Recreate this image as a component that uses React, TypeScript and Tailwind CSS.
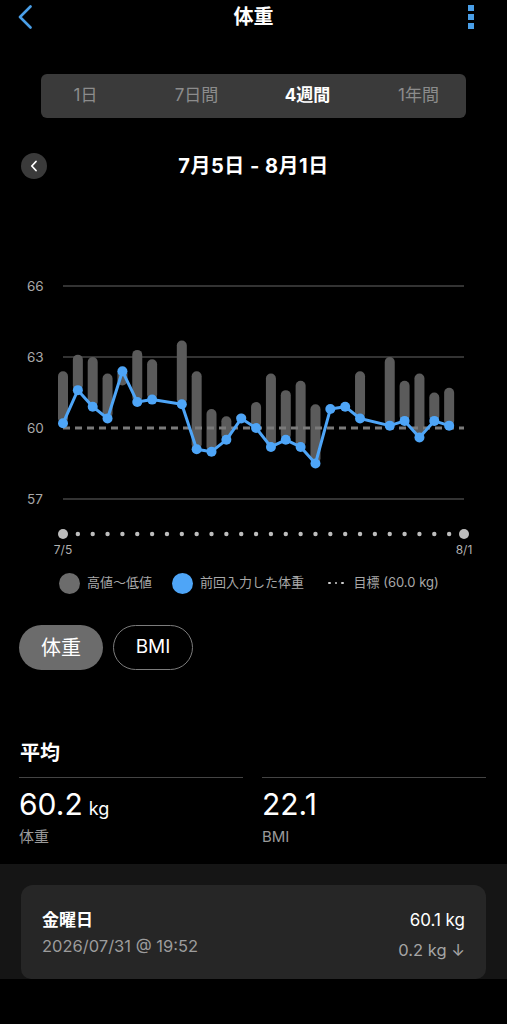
import React from "react"

type Bar = { i: number; hi: number; lo: number }

// day index (0 = 7/5) -> weight last entered
const points: [number, number][] = [
  [0, 60.2], [1, 61.6], [2, 60.9], [3, 60.4], [4, 62.4], [5, 61.1], [6, 61.2],
  [8, 61.0], [9, 59.1], [10, 59.0], [11, 59.5], [12, 60.4], [13, 60.0],
  [14, 59.2], [15, 59.5], [16, 59.2], [17, 58.5], [18, 60.8], [19, 60.9],
  [20, 60.4], [22, 60.1], [23, 60.3], [24, 59.6], [25, 60.3], [26, 60.1],
]

const bars: Bar[] = [
  { i: 0, hi: 62.4, lo: 60.2 },
  { i: 1, hi: 63.1, lo: 61.6 },
  { i: 2, hi: 63.0, lo: 60.9 },
  { i: 3, hi: 62.3, lo: 60.4 },
  { i: 4, hi: 62.5, lo: 61.8 },
  { i: 5, hi: 63.3, lo: 61.1 },
  { i: 6, hi: 62.9, lo: 61.2 },
  { i: 8, hi: 63.7, lo: 61.0 },
  { i: 9, hi: 62.4, lo: 59.1 },
  { i: 10, hi: 60.8, lo: 59.0 },
  { i: 11, hi: 60.5, lo: 59.5 },
  { i: 12, hi: 60.6, lo: 60.3 },
  { i: 13, hi: 61.1, lo: 60.0 },
  { i: 14, hi: 62.3, lo: 59.2 },
  { i: 15, hi: 61.6, lo: 59.5 },
  { i: 16, hi: 62.0, lo: 59.2 },
  { i: 17, hi: 61.0, lo: 58.5 },
  { i: 20, hi: 62.4, lo: 60.4 },
  { i: 22, hi: 63.0, lo: 60.1 },
  { i: 23, hi: 62.0, lo: 60.3 },
  { i: 24, hi: 62.3, lo: 59.6 },
  { i: 25, hi: 61.5, lo: 60.3 },
  { i: 26, hi: 61.7, lo: 60.1 },
]

const X0 = 63
const DX = 401 / 27
const BLUE = "#4ea5f7"

const xOf = (i: number) => X0 + i * DX
const yOf = (kg: number) => 168 - (kg - 60) * 23.667

function WeightChart() {
  const linePts = points.map(([i, kg]) => `${xOf(i)},${yOf(kg)}`).join(" ")
  return (
    <svg width={507} height={300} className="block">
      {[66, 63, 57].map((v) => (
        <line key={v} x1={63} x2={464} y1={yOf(v)} y2={yOf(v)} stroke="#454545" strokeWidth={1.5} />
      ))}
      {[66, 63, 60, 57].map((v) => (
        <text key={v} x={27} y={yOf(v)} dominantBaseline="central" fontSize={13.5} fill="#a9a9a9">
          {v}
        </text>
      ))}
      {bars.map((b) => (
        <rect
          key={b.i}
          x={xOf(b.i) - 5}
          y={yOf(b.hi)}
          width={10}
          height={yOf(b.lo) - yOf(b.hi)}
          rx={5}
          fill="#5b5b5b"
        />
      ))}
      <line x1={63} x2={464} y1={168} y2={168} stroke="#7a7a7a" strokeWidth={3} strokeDasharray="7 5" />
      <polyline points={linePts} fill="none" stroke={BLUE} strokeWidth={3} strokeLinejoin="round" />
      {points.map(([i, kg]) => (
        <circle key={i} cx={xOf(i)} cy={yOf(kg)} r={5} fill={BLUE} />
      ))}
      {Array.from({ length: 28 }, (_, i) => (
        <circle key={i} cx={xOf(i)} cy={274} r={i === 0 || i === 27 ? 5 : 2.2} fill="#bdbdbd" />
      ))}
      <text x={63} y={289} textAnchor="middle" dominantBaseline="central" fontSize={12} fill="#b0b0b0">
        7/5
      </text>
      <text x={464} y={289} textAnchor="middle" dominantBaseline="central" fontSize={12} fill="#b0b0b0">
        8/1
      </text>
    </svg>
  )
}

export default function App() {
  const tabs = ["1日", "7日間", "4週間", "1年間"]
  return (
    <div className="w-[507px] min-h-[1024px] bg-black text-white [font-family:Inter,'Noto_Sans_CJK_JP',sans-serif]">
      {/* header */}
      <div className="flex h-[34px] items-center justify-between">
        <div className="w-[60px] pl-[18px]">
          <svg width={14} height={24} viewBox="0 0 14 24">
            <path d="M12.5 1.5 L2 12 L12.5 22.5" fill="none" stroke="#4a9fe8" strokeWidth={2.6} strokeLinecap="round" strokeLinejoin="round" />
          </svg>
        </div>
        <div className="text-[20px] font-bold">体重</div>
        <div className="w-[60px] pl-[21px]">
          <div className="flex w-[6px] flex-col gap-[3px]">
            <div className="h-[6px] w-[6px] bg-[#4a9fe8]" />
            <div className="h-[6px] w-[6px] bg-[#4a9fe8]" />
            <div className="h-[6px] w-[6px] bg-[#4a9fe8]" />
          </div>
        </div>
      </div>

      {/* range tabs */}
      <div className="mx-[41px] mt-[40px] h-[44px] overflow-visible rounded-[6px] bg-[#3a3a3a]">
        <div className="ml-[-11px] flex h-full w-[444px] items-center">
          {tabs.map((t) => (
            <div
              key={t}
              className={
                t === "4週間"
                  ? "w-[111px] text-center text-[17px] font-bold text-white"
                  : "w-[111px] text-center text-[17px] text-[#8c8c8c]"
              }
            >
              {t}
            </div>
          ))}
        </div>
      </div>

      {/* date range */}
      <div className="mt-[33px] grid h-[28px] grid-cols-[1fr_auto_1fr] items-center">
        <div className="pl-[21px]">
          <div className="flex h-[26px] w-[26px] items-center justify-center rounded-full bg-[#3a3a3a]">
            <svg width={8} height={12} viewBox="0 0 8 12">
              <path d="M6 1.5 L1.8 6 L6 10.5" fill="none" stroke="#fff" strokeWidth={1.8} strokeLinecap="round" strokeLinejoin="round" />
            </svg>
          </div>
        </div>
        <div className="text-[20px] font-bold tracking-[0.5px]">7月5日 - 8月1日</div>
        <div />
      </div>

      <div className="mt-[81px]">
        <WeightChart />
      </div>

      {/* legend */}
      <div className="mt-[11px] flex h-[24px] items-center pl-[59px] text-[13px] text-[#a8a8a8]">
        <div className="h-[21px] w-[21px] rounded-full bg-[#6c6c6c]" />
        <span className="ml-[7px]">高値〜低値</span>
        <div className="ml-[20px] h-[21px] w-[21px] rounded-full bg-[#4ea5f7]" />
        <span className="ml-[7px]">前回入力した体重</span>
        <div className="ml-[24px] flex gap-[4px]">
          <div className="h-[2.5px] w-[2.5px] rounded-full bg-[#cfcfcf]" />
          <div className="h-[2.5px] w-[2.5px] rounded-full bg-[#cfcfcf]" />
          <div className="h-[2.5px] w-[2.5px] rounded-full bg-[#cfcfcf]" />
        </div>
        <span className="ml-[10px]">目標 (60.0 kg)</span>
      </div>

      {/* metric toggle */}
      <div className="mt-[30px] flex pl-[19px]">
        <div className="flex h-[45px] w-[84px] items-center justify-center rounded-full bg-[#6c6c6c] text-[20px]">
          体重
        </div>
        <div className="ml-[10px] flex h-[45px] w-[80px] items-center justify-center rounded-full border-[1.5px] border-[#7c7c7c] text-[19px]">
          BMI
        </div>
      </div>

      {/* averages */}
      <div className="mt-[69px] pl-[20px] text-[20px] font-bold leading-[28px]">平均</div>
      <div className="mt-[10px] grid grid-cols-2 gap-[19px] pl-[19px] pr-[21px]">
        <div className="border-t-[1.5px] border-[#444]">
          <div className="mt-[8px] flex items-baseline leading-[36px]">
            <span className="text-[30px]">60.2</span>
            <span className="ml-[6px] text-[18px]">kg</span>
          </div>
          <div className="text-[15px] leading-[20px] text-[#9a9a9a]">体重</div>
        </div>
        <div className="border-t-[1.5px] border-[#444]">
          <div className="mt-[8px] leading-[36px]">
            <span className="text-[30px]">22.1</span>
          </div>
          <div className="text-[15px] leading-[20px] text-[#9a9a9a]">BMI</div>
        </div>
      </div>

      {/* latest entry */}
      <div className="mt-[17px] bg-[#151515] px-[21px] pt-[21px]">
        <div className="flex h-[94px] justify-between rounded-t-[12px] rounded-b-[10px] bg-[#262626] px-[21px] pt-[22px]">
          <div>
            <div className="text-[17px] font-bold leading-[26px]">金曜日</div>
            <div className="text-[16.5px] leading-[26px] text-[#9c9c9c]">2026/07/31 @ 19:52</div>
          </div>
          <div className="text-right">
            <div className="text-[17px] leading-[26px]">60.1 kg</div>
            <div className="mt-[4px] text-[16.5px] leading-[26px] text-[#a5a5a5]">0.2 kg ↓</div>
          </div>
        </div>
      </div>
    </div>
  )
}
